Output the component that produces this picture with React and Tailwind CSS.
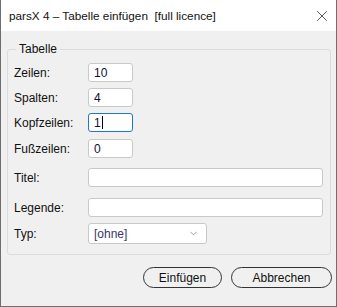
import { X, ChevronDown } from "lucide-react";

const font = { fontFamily: '"Liberation Sans", Arial, sans-serif' };

function Row({ label, mt, children }) {
  return (
    <div className={`flex items-center ${mt}`}>
      <span className="w-[74px] shrink-0 text-[12px] leading-none text-[#111]">{label}</span>
      {children}
    </div>
  );
}

function Box({ value, w = "w-[45px]", focus = false }) {
  return (
    <div
      className={`${w} h-[19px] rounded-[3px] bg-white flex items-center pl-[5px] text-[12px] text-[#101030] border ${
        focus ? "border-[#1f74d6]" : "border-[#c9c9c9]"
      }`}
    >
      {value}
      {focus && <span className="ml-[1px] w-[1px] h-[13px] bg-black" />}
    </div>
  );
}

export default function App() {
  return (
    <div
      className="w-[337px] h-[307px] flex flex-col bg-[#f0f0f0] border border-t-0 border-[#6e6e6e]"
      style={font}
    >
      {/* titelleiste */}
      <div className="h-[31px] shrink-0 bg-white flex items-center pl-[8px] pr-[5px]">
        <span className="text-[11.75px] text-[#111] whitespace-pre">parsX 4 – Tabelle einfügen  [full licence]</span>
        <X size={18} strokeWidth={1} className="ml-auto text-[#222]" />
      </div>

      {/* gruppe */}
      <fieldset className="mt-[10px] ml-[6px] w-[324px] border border-[#dcdcdc] rounded-[3px] px-[6px] pb-[10px]">
        <legend className="ml-[2px] px-[3px] text-[12px] leading-[16px] text-[#111]">Tabelle</legend>
        <Row label="Zeilen:" mt="mt-[6px]">
          <Box value="10" />
        </Row>
        <Row label="Spalten:" mt="mt-[6px]">
          <Box value="4" />
        </Row>
        <Row label="Kopfzeilen:" mt="mt-[6px]">
          <Box value="1" focus />
        </Row>
        <Row label="Fußzeilen:" mt="mt-[7px]">
          <Box value="0" />
        </Row>
        <Row label="Titel:" mt="mt-[10px]">
          <Box value="" w="w-[235px]" />
        </Row>
        <Row label="Legende:" mt="mt-[11px]">
          <Box value="" w="w-[235px]" />
        </Row>
        <Row label="Typ:" mt="mt-[6px]">
          <div className="w-[119px] h-[21px] rounded-[3px] bg-white border border-[#c9c9c9] flex items-center pl-[5px] pr-[7px] text-[12px] text-[#3b3566]">
            [ohne]
            <ChevronDown size={11} strokeWidth={1.5} className="ml-auto text-[#777]" />
          </div>
        </Row>
      </fieldset>

      {/* knöpfe */}
      <div className="flex justify-end gap-[9px] mt-[12px] pr-[4px]">
        <button className="w-[79px] h-[21px] rounded-full border border-[#333] bg-[#f0f0f0] text-[12px] text-[#111] leading-none">
          Einfügen
        </button>
        <button className="w-[101px] h-[21px] rounded-full border border-[#333] bg-[#f0f0f0] text-[12px] text-[#111] leading-none">
          Abbrechen
        </button>
      </div>
    </div>
  );
}
